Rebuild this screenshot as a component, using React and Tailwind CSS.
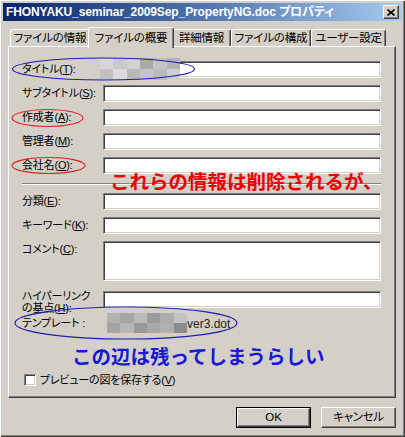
import React from 'react';

const topRows = [
  { label: 'タイトル', key: 'T' },
  { label: 'サブタイトル', key: 'S' },
  { label: '作成者', key: 'A' },
  { label: '管理者', key: 'M' },
  { label: '会社名', key: 'O' },
];

const tabs = [
  { name: 'ファイルの情報', w: 'w-[80px]' },
  { name: 'ファイルの概要', w: 'w-[86px]', active: true },
  { name: '詳細情報', w: 'w-[59px]' },
  { name: 'ファイルの構成', w: 'w-[80px]' },
  { name: 'ユーザー設定', w: 'w-[75px]' },
];

const titleMosaic = [
  'bg-[#d6d6d6]', 'bg-[#c9c9c9]', 'bg-[#d2d2d2]', 'bg-[#aaaaaa]', 'bg-[#c4c4c4]', 'bg-[#b2b2b2]',
  'bg-[#c2c2c2]', 'bg-[#dadada]', 'bg-[#b8b8b8]', 'bg-[#c6c6c6]', 'bg-[#bcbcbc]', 'bg-[#cfcfcf]',
];

const templateMosaic = [
  'bg-[#b2b2b2]', 'bg-[#a6a6a6]', 'bg-[#bababa]', 'bg-[#9c9c9c]', 'bg-[#acacac]', 'bg-[#c4c4c4]',
  'bg-[#a4a4a4]', 'bg-[#b6b6b6]', 'bg-[#989898]', 'bg-[#a8a8a8]', 'bg-[#b0b0b0]', 'bg-[#8c8c8c]',
];

function Field({ tall }) {
  return (
    <div
      className={`w-[278px] ${tall ? 'h-[40px]' : 'h-[17px]'} bg-white border border-[#808080] border-r-white border-b-white shadow-[inset_1px_1px_0_#404040,inset_-1px_-1px_0_#d4d0c8]`}
    />
  );
}

function Row({ label, k }) {
  return (
    <div className="flex items-center h-[17px] mb-[7px]">
      <div className="w-[81px] text-[11px] leading-none whitespace-nowrap tracking-[-0.2px]">
        {label}(<u>{k}</u>):
      </div>
      <Field />
    </div>
  );
}

function Mosaic({ cells, className }) {
  return (
    <div className={`absolute z-10 grid grid-cols-6 ${className}`}>
      {cells.map((c, i) => (
        <div key={i} className={c} />
      ))}
    </div>
  );
}

export default function App() {
  return (
    <div className="relative w-[405px] h-[437px] overflow-hidden bg-[#d4d0c8] p-[3px] text-black font-['Liberation_Sans','Noto_Sans_CJK_JP',sans-serif] [font-feature-settings:'palt'_1] shadow-[inset_1px_1px_0_#ffffff,inset_-1px_-1px_0_#404040,inset_-2px_-2px_0_#808080]">
      {/* title bar */}
      <div className="h-[18px] flex items-center justify-between px-[3px] bg-linear-to-r from-[#0a246a] to-[#a6caf0]">
        <span className="text-white font-bold text-[12px] leading-none tracking-[-0.1px] whitespace-nowrap">
          FHONYAKU_seminar_2009Sep_PropertyNG.doc プロパティ
        </span>
        <div className="w-[16px] h-[14px] bg-[#d4d0c8] flex items-center justify-center border-t border-l border-white border-r border-b border-r-[#404040] border-b-[#404040] shadow-[inset_-1px_-1px_0_#808080]">
          <svg width="8" height="7" viewBox="0 0 8 7">
            <path d="M0.5 0.5 L7.5 6.5 M7.5 0.5 L0.5 6.5" stroke="#000" strokeWidth="1.6" />
          </svg>
        </div>
      </div>

      {/* tabs */}
      <div className="flex items-end h-[21px] mt-[6px] pl-[7px]">
        {tabs.map((t) =>
          t.active ? (
            <div
              key={t.name}
              className={`relative z-10 ${t.w} -mx-[2px] h-[21px] bg-[#d4d0c8] border-t border-l border-white border-r border-r-[#404040] shadow-[inset_-1px_0_0_#808080] rounded-t-[3px] flex justify-center pt-[4px] text-[11.5px] leading-[13px] whitespace-nowrap tracking-[-0.2px]`}
            >
              {t.name}
            </div>
          ) : (
            <div
              key={t.name}
              className={`${t.w} h-[17px] mb-[2px] border-t border-l border-white border-r border-r-[#404040] shadow-[inset_-1px_0_0_#808080] rounded-t-[3px] flex justify-center pt-[2px] text-[11.5px] leading-[13px] whitespace-nowrap tracking-[-0.2px]`}
            >
              {t.name}
            </div>
          )
        )}
      </div>

      {/* panel */}
      <div className="-mt-[2px] ml-[5px] w-[388px] h-[352px] border-t border-l border-white border-r border-b border-r-[#404040] border-b-[#404040] shadow-[inset_-1px_-1px_0_#808080] pt-[14px] pl-[13px]">
        {topRows.map((r) => (
          <Row key={r.key} label={r.label} k={r.key} />
        ))}

        <div className="-mt-[7px] pt-[9px]">
          <div className="w-[359px] h-[2px] border-t border-[#808080] border-b border-b-white" />
        </div>

        <div className="mt-[8px]">
          <Row label="分類" k="E" />
          <Row label="キーワード" k="K" />
          <div className="flex items-start h-[40px]">
            <div className="w-[81px] text-[11px] leading-none pt-[3px] whitespace-nowrap tracking-[-0.2px]">
              コメント(<u>C</u>):
            </div>
            <Field tall />
          </div>
          <div className="flex items-start mt-[10px] h-[23px]">
            <div className="w-[81px] text-[11px] leading-[12px] -mt-[1px] whitespace-nowrap tracking-[-0.2px]">
              ハイパーリンク
              <br />
              の基点(<u>H</u>):
            </div>
            <Field />
          </div>
          <div className="flex items-center h-[17px] mt-[1px] text-[11px] leading-none whitespace-nowrap">
            <div className="w-[84px] tracking-[-0.2px]">テンプレート :</div>
            <div className="w-[81px]" />
            <div className="text-[#222] text-[12px]">ver3.dot</div>
          </div>
          <div className="flex items-center h-[12px] mt-[42px] pl-[2px] gap-[4px] text-[11px] leading-none whitespace-nowrap tracking-[-0.2px]">
            <div className="w-[12px] h-[12px] bg-white border border-[#808080] border-r-white border-b-white shadow-[inset_1px_1px_0_#404040,inset_-1px_-1px_0_#d4d0c8]" />
            <span>
              プレビューの図を保存する(<u>V</u>)
            </span>
          </div>
        </div>
      </div>

      {/* buttons */}
      <div className="flex justify-end gap-[10px] mt-[9px] pr-[6px] text-[11.5px]">
        <div className="w-[75px] h-[21px] border border-black">
          <div className="w-full h-full flex items-center justify-center border-t border-l border-white border-r border-b border-r-[#404040] border-b-[#404040] shadow-[inset_-1px_-1px_0_#808080]">
            OK
          </div>
        </div>
        <div className="w-[75px] h-[21px] flex items-center justify-center border-t border-l border-white border-r border-b border-r-[#404040] border-b-[#404040] shadow-[inset_-1px_-1px_0_#808080] tracking-[-0.3px]">
          キャンセル
        </div>
      </div>

      {/* blurred values */}
      <Mosaic cells={titleMosaic} className="left-[100px] top-[58px] w-[80px] h-[22px]" />
      <Mosaic cells={templateMosaic} className="left-[107px] top-[313px] w-[80px] h-[20px]" />

      {/* annotations */}
      <div className="absolute z-20 left-[110px] top-[171px] text-[19.5px] leading-none font-semibold text-[#f00000] whitespace-nowrap [font-feature-settings:normal] font-['Noto_Sans_CJK_JP',sans-serif]">
        これらの情報は削除されるが、
      </div>
      <div className="absolute z-20 left-[72px] top-[346px] text-[19.5px] leading-none font-semibold text-[#1818d8] whitespace-nowrap [font-feature-settings:normal] font-['Noto_Sans_CJK_JP',sans-serif]">
        この辺は残ってしまうらしい
      </div>
      <svg className="absolute z-20 left-0 top-0 pointer-events-none" width="405" height="437">
        <ellipse cx="103.5" cy="69" rx="91" ry="11" fill="none" stroke="#1e1eb0" strokeWidth="1.2" />
        <ellipse cx="47.5" cy="118" rx="35.5" ry="8.5" fill="none" stroke="#e02020" strokeWidth="1.1" />
        <ellipse cx="48.5" cy="165.5" rx="36.5" ry="8" fill="none" stroke="#e02020" strokeWidth="1.1" />
        <ellipse cx="126" cy="323" rx="111" ry="16" fill="none" stroke="#1e1eb0" strokeWidth="1.2" />
      </svg>
    </div>
  );
}
